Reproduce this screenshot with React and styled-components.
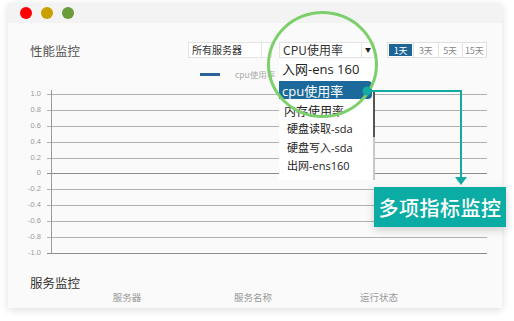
import React from "react";
import styled, { createGlobalStyle } from "styled-components";

const GlobalStyle = createGlobalStyle`
  html, body {
    margin: 0;
    padding: 0;
    background: #ffffff;
  }
  body {
    font-family: "Open Sans", "Noto Sans CJK SC", sans-serif;
  }
`;

const yTicks = ["1.0", "0.8", "0.6", "0.4", "0.2", "0", "-0.2", "-0.4", "-0.6", "-0.8", "-1.0"];
const days = ["1天", "3天", "5天", "15天"];
const metrics = [
  { label: "入网-ens 160", size: 13, h: 19, pad: 3 },
  { label: "cpu使用率", size: 13, h: 18, pad: 3, active: true },
  { label: "内存使用率", size: 12, h: 23, pad: 5 },
  { label: "硬盘读取-sda", size: 11, h: 12, pad: 8 },
  { label: "硬盘写入-sda", size: 11, h: 25, pad: 8 },
  { label: "出网-ens160", size: 11, h: 12, pad: 8 },
];
const columns = ["服务器", "服务名称", "运行状态"];

const ROW = 15.9;

const Page = styled.div`
  padding: 3px 12px 14px 8px;
`;

const Window = styled.div`
  position: relative;
  width: 494px;
  height: 305px;
  background: #fafafa;
  box-shadow: 0 2px 8px rgba(0, 0, 0, 0.13);
`;

const TitleBar = styled.div`
  height: 20px;
  background: #f3f3f3;
  display: flex;
  align-items: center;
  gap: 9px;
  padding-left: 12px;
`;

const Dot = styled.span`
  width: 12px;
  height: 12px;
  border-radius: 50%;
  background: ${(p) => p.color};
`;

const Header = styled.div`
  display: flex;
  align-items: center;
  height: 16px;
  margin-top: 19px;
  padding: 0 15px 0 22px;
`;

const Title = styled.div`
  flex: 1;
  font-family: "Noto Sans CJK SC", sans-serif;
  font-size: 12.5px;
  color: #555;
  line-height: 16px;
  margin-top: 2px;
`;

const Select = styled.div`
  display: flex;
  align-items: center;
  height: 16px;
  width: ${(p) => p.w}px;
  margin-right: ${(p) => p.mr}px;
  box-sizing: border-box;
  border: 1px solid #e4e4e4;
  background: #fff;
`;

const SelectText = styled.div`
  flex: 1;
  font-family: "Noto Sans CJK SC", sans-serif;
  font-size: ${(p) => p.size}px;
  line-height: 14px;
  color: #333;
  padding-left: ${(p) => p.pad}px;
  white-space: nowrap;
`;

const SelectArrow = styled.div`
  align-self: stretch;
  width: ${(p) => p.w}px;
  border-left: 1px solid #e4e4e4;
  display: flex;
  align-items: flex-start;
  justify-content: center;
  padding-top: 2px;
  box-sizing: border-box;
  font-size: 6px;
  color: #222;
`;

const DayGroup = styled.div`
  display: flex;
  width: 100px;
  height: 16px;
  box-sizing: border-box;
  border: 1px solid #e0e0e0;
  background: #fff;
`;

const DayButton = styled.div`
  flex: 1;
  display: flex;
  align-items: center;
  justify-content: center;
  font-family: "Noto Sans CJK SC", sans-serif;
  font-size: 9px;
  color: ${(p) => (p.active ? "#fff" : "#888")};
  background: ${(p) => (p.active ? "#1d6497" : "#fff")};
  border-left: ${(p) => (p.first ? "none" : "1px solid #e0e0e0")};
  margin: ${(p) => (p.active ? "1px" : "0")};
`;

const Legend = styled.div`
  display: flex;
  align-items: center;
  gap: 15px;
  height: 12px;
  margin-top: 10px;
  padding-left: 192px;
`;

const LegendLine = styled.span`
  width: 20px;
  height: 3px;
  background: #2a629a;
`;

const LegendText = styled.span`
  font-family: "Noto Sans CJK SC", sans-serif;
  font-size: 8.5px;
  color: #aaa;
`;

const Chart = styled.div`
  display: flex;
  margin-top: 6px;
`;

const YLabels = styled.div`
  width: 33px;
  display: flex;
  flex-direction: column;
  margin-right: 6px;
`;

const YLabel = styled.div`
  height: ${ROW}px;
  line-height: ${ROW}px;
  text-align: right;
  font-family: "Liberation Sans", sans-serif;
  font-size: 7.5px;
  color: #9a9a9a;
`;

const Service = styled.div`
  margin-top: 14px;
  padding-left: 22px;
`;

const ServiceTitle = styled.div`
  font-family: "Noto Sans CJK SC", sans-serif;
  font-size: 12.5px;
  line-height: 16px;
  color: #333;
`;

const Columns = styled.div`
  display: grid;
  grid-template-columns: repeat(3, 126px);
  margin-left: 34px;
`;

const ColumnHead = styled.div`
  text-align: center;
  font-family: "Noto Sans CJK SC", sans-serif;
  font-size: 9.5px;
  line-height: 12px;
  color: #999;
`;

/* overlays: the open dropdown, the magnifier ring, the callout */

const DropList = styled.div`
  position: absolute;
  left: 271px;
  top: 56px;
  width: 96px;
  height: 121px;
  background: #fff;
  display: flex;
  flex-direction: column;
`;

const DropItem = styled.div`
  height: ${(p) => p.h}px;
  margin-top: ${(p) => (p.active ? 3 : 0)}px;
  margin-right: ${(p) => (p.active ? 3 : 0)}px;
  display: flex;
  align-items: center;
  padding-left: ${(p) => p.pad}px;
  font-family: "Open Sans", "Noto Sans CJK SC", sans-serif;
  font-size: ${(p) => p.size}px;
  color: ${(p) => (p.active ? "#fff" : "#222")};
  background: ${(p) => (p.active ? "#1c6a9b" : "transparent")};
  border-radius: ${(p) => (p.active ? "0 4px 4px 0" : "0")};
  white-space: nowrap;
`;

const ScrollTrack = styled.div`
  position: absolute;
  right: 0;
  top: 33px;
  width: 2px;
  height: 88px;
  background: #c9c9c9;
`;

const ScrollThumb = styled.div`
  height: 45px;
  background: #555;
`;

const Ring = styled.div`
  position: absolute;
  left: 259px;
  top: 8px;
  width: 105px;
  height: 101px;
  border: 3px solid #7ccf6b;
  border-radius: 50%;
  pointer-events: none;
`;

const Connector = styled.svg`
  position: absolute;
  left: 352px;
  top: 82px;
  overflow: visible;
`;

const Callout = styled.div`
  position: absolute;
  left: 366px;
  top: 184px;
  width: 132px;
  height: 40px;
  background: #0aaca4;
  color: #fff;
  display: flex;
  align-items: center;
  justify-content: center;
  font-family: "Noto Sans CJK SC", sans-serif;
  font-size: 20px;
  font-weight: 500;
  letter-spacing: 0.5px;
  box-shadow: 0 3px 8px rgba(0, 0, 0, 0.18);
`;

const PlotChart = () => {
  const w = 440;
  const h = ROW * yTicks.length;
  const first = ROW / 2;
  const last = first + ROW * (yTicks.length - 1);
  return (
    <svg width={w} height={h}>
      {yTicks.map((t, i) => {
        const y = Math.round(first + i * ROW) + 0.5;
        const dark = t === "0" || t === "-1.0";
        return (
          <line key={t} x1={0} x2={w} y1={y} y2={y} stroke={dark ? "#8c8c8c" : "#b0b0b0"} strokeWidth={1} />
        );
      })}
      <line x1={4.5} x2={4.5} y1={first - 4} y2={Math.round(last) + 0.5} stroke="#9a9a9a" strokeWidth={1} />
    </svg>
  );
};

const App = () => {
  return (
    <Page>
      <GlobalStyle />
      <Window>
        <TitleBar>
          <Dot color="#ff0000" />
          <Dot color="#c9a000" />
          <Dot color="#6b9c3a" />
        </TitleBar>

        <Header>
          <Title>性能监控</Title>
          <Select w={84} mr={7}>
            <SelectText size={10} pad={3}>所有服务器</SelectText>
            <SelectArrow w={10} />
          </Select>
          <Select w={96} mr={12}>
            <SelectText size={12} pad={3}>CPU使用率</SelectText>
            <SelectArrow w={13}>▼</SelectArrow>
          </Select>
          <DayGroup>
            {days.map((d, i) => (
              <DayButton key={d} active={i === 0} first={i === 0}>
                {d}
              </DayButton>
            ))}
          </DayGroup>
        </Header>

        <Legend>
          <LegendLine />
          <LegendText>cpu使用率</LegendText>
        </Legend>

        <Chart>
          <YLabels>
            {yTicks.map((t) => (
              <YLabel key={t}>{t}</YLabel>
            ))}
          </YLabels>
          <PlotChart />
        </Chart>

        <Service>
          <ServiceTitle>服务监控</ServiceTitle>
          <Columns>
            {columns.map((c) => (
              <ColumnHead key={c}>{c}</ColumnHead>
            ))}
          </Columns>
        </Service>

        <DropList>
          {metrics.map((m) => (
            <DropItem key={m.label} {...m}>
              {m.label}
            </DropItem>
          ))}
          <ScrollTrack>
            <ScrollThumb />
          </ScrollTrack>
        </DropList>

        <Ring />

        <Connector width={110} height={104}>
          <polyline points="7,6 101,6 101,93" fill="none" stroke="#12aaa2" strokeWidth={2} />
          <polygon points="95,92 107,92 101,100" fill="#12aaa2" />
          <circle cx={7} cy={6} r={4.5} fill="#12aaa2" />
        </Connector>

        <Callout>多项指标监控</Callout>
      </Window>
    </Page>
  );
};

export default App;
